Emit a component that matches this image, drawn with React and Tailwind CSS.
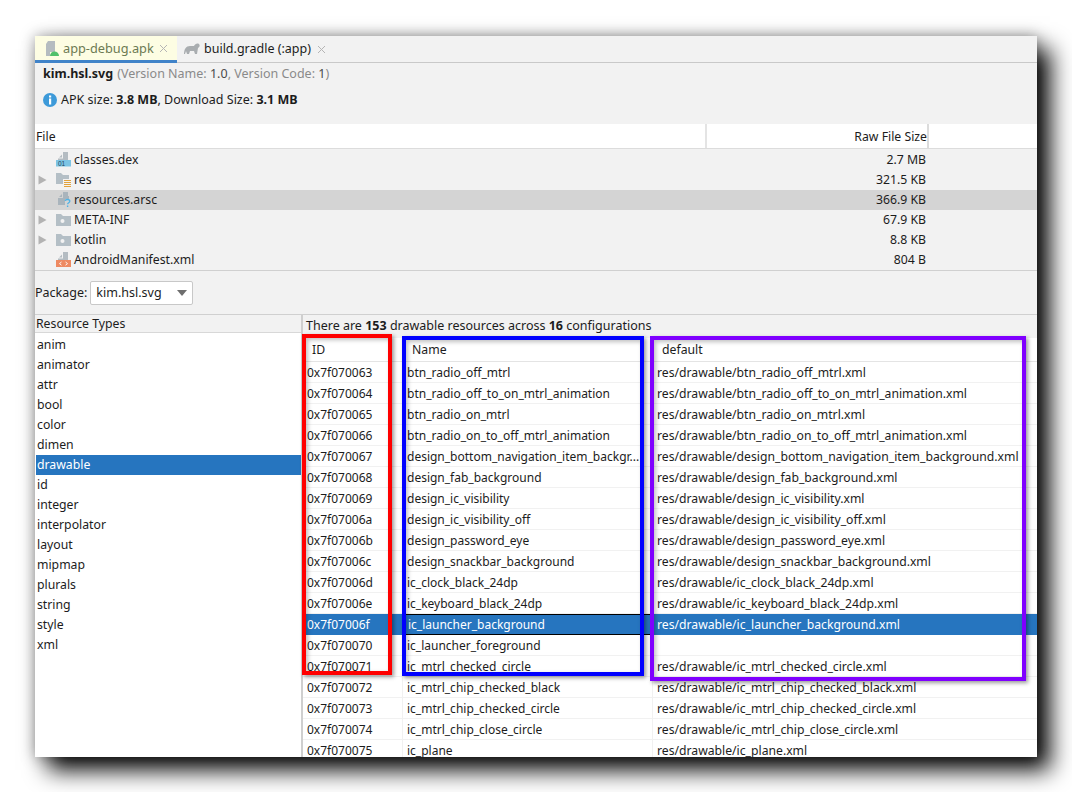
import React from "react";

const files = [
  { n: "classes.dex", s: "2.7 MB", i: "dex" },
  { n: "res", s: "321.5 KB", i: "res", a: true },
  { n: "resources.arsc", s: "366.9 KB", i: "arsc", sel: true },
  { n: "META-INF", s: "67.9 KB", i: "dir", a: true },
  { n: "kotlin", s: "8.8 KB", i: "dir", a: true },
  { n: "AndroidManifest.xml", s: "804 B", i: "xml" },
];
const types = ["anim","animator","attr","bool","color","dimen","drawable","id","integer","interpolator","layout","mipmap","plurals","string","style","xml"];
const rows = [
  ["0x7f070063","btn_radio_off_mtrl","res/drawable/btn_radio_off_mtrl.xml"],
  ["0x7f070064","btn_radio_off_to_on_mtrl_animation","res/drawable/btn_radio_off_to_on_mtrl_animation.xml"],
  ["0x7f070065","btn_radio_on_mtrl","res/drawable/btn_radio_on_mtrl.xml"],
  ["0x7f070066","btn_radio_on_to_off_mtrl_animation","res/drawable/btn_radio_on_to_off_mtrl_animation.xml"],
  ["0x7f070067","design_bottom_navigation_item_backgr...","res/drawable/design_bottom_navigation_item_background.xml"],
  ["0x7f070068","design_fab_background","res/drawable/design_fab_background.xml"],
  ["0x7f070069","design_ic_visibility","res/drawable/design_ic_visibility.xml"],
  ["0x7f07006a","design_ic_visibility_off","res/drawable/design_ic_visibility_off.xml"],
  ["0x7f07006b","design_password_eye","res/drawable/design_password_eye.xml"],
  ["0x7f07006c","design_snackbar_background","res/drawable/design_snackbar_background.xml"],
  ["0x7f07006d","ic_clock_black_24dp","res/drawable/ic_clock_black_24dp.xml"],
  ["0x7f07006e","ic_keyboard_black_24dp","res/drawable/ic_keyboard_black_24dp.xml"],
  ["0x7f07006f","ic_launcher_background","res/drawable/ic_launcher_background.xml"],
  ["0x7f070070","ic_launcher_foreground",""],
  ["0x7f070071","ic_mtrl_checked_circle","res/drawable/ic_mtrl_checked_circle.xml"],
  ["0x7f070072","ic_mtrl_chip_checked_black","res/drawable/ic_mtrl_chip_checked_black.xml"],
  ["0x7f070073","ic_mtrl_chip_checked_circle","res/drawable/ic_mtrl_chip_checked_circle.xml"],
  ["0x7f070074","ic_mtrl_chip_close_circle","res/drawable/ic_mtrl_chip_close_circle.xml"],
  ["0x7f070075","ic_plane","res/drawable/ic_plane.xml"],
];

const docPath = "M7 0H12V8H2V6.500H7Z M3 5.500L6 2.500V5.500Z";

function FileIcon({ k }) {
  if (k === "dex")
    return (
      <svg width="16" height="16" viewBox="0 0 16 16">
        <path d={docPath} fill="#b4bcc2" />
        <rect x="0" y="8" width="15" height="6.500" fill="#7cc4e4" />
        <text x="2" y="14" fontSize="6.500" fill="#23475a" fontFamily="Liberation Sans">01</text>
      </svg>
    );
  if (k === "xml")
    return (
      <svg width="16" height="16" viewBox="0 0 16 16">
        <path d={docPath} fill="#b4bcc2" />
        <rect x="0" y="8" width="15" height="7" fill="#ee8a62" />
        <path d="M5.500 10l-2 1.600 2 1.600M9.500 10l2 1.600-2 1.600" fill="none" stroke="#fff" strokeWidth="0.9" />
      </svg>
    );
  if (k === "arsc")
    return (
      <svg width="16" height="16" viewBox="0 0 16 16">
        <path d="M7 0H12V4H13V7H9V13H2V6H7Z M3 5L6 2V5Z" fill="#a9b4bc" />
        <path d="M9.200 8.800c.3-1.800 4.600-1.800 4.600.4 0 1.500-2.200 1.600-2.200 3.100" fill="none" stroke="#4fb3e6" strokeWidth="1.300" />
        <rect x="10.900" y="13.500" width="1.400" height="1.500" fill="#4fb3e6" />
      </svg>
    );
  if (k === "res")
    return (
      <svg width="16" height="16" viewBox="0 0 16 16">
        <path d="M0 1h5l2 2h6v9H0z" fill="#b4bfc6" />
        <rect x="7" y="7" width="9" height="9" fill="#f2f2f2" />
        <path d="M8 8.500h7M8 10.500h7M8 12.500h7M8 14.500h7" stroke="#e2a33c" strokeWidth="1" />
      </svg>
    );
  return (
    <svg width="16" height="16" viewBox="0 0 16 16">
      <path d="M0 2h5l2 2h8v10H0z" fill="#b4bfc6" />
      <circle cx="6.500" cy="9" r="2" fill="#f2f2f2" />
    </svg>
  );
}

const Arrow = () => (
  <svg width="9" height="10" viewBox="0 0 9 10"><path d="M0.500 0.500L8.500 5L0.500 9.500z" fill="#b3b3b3" /></svg>
);

const X = () => (
  <svg width="9" height="9" viewBox="0 0 9 9"><path d="M1 1l7 7M8 1l-7 7" stroke="#b5b5b5" strokeWidth="1" /></svg>
);

export default function App() {
  return (
    <div className="relative w-[1072px] h-[792px] bg-white pt-[36px] pl-[35px] overflow-hidden text-[12.25px] leading-[20px] text-[#1c1c1c] font-['Noto_Sans','Open_Sans',sans-serif]">
      <div className="w-[1002px] h-[721px] overflow-hidden flex flex-col bg-[#f2f2f2] shadow-[13px_13px_22px_rgba(0,0,0,0.98),0_0_14px_rgba(0,0,0,0.35)]">
        {/* tabs */}
        <div className="flex h-[27px] shrink-0 border-b border-[#c9c9c9]">
          <div className="w-[142px] bg-[#fdfde3] border-b-[3px] border-[#4083c9] flex items-center pl-[10px] -mb-px">
            <svg className="mt-[1px]" width="15" height="16" viewBox="0 0 15 16">
              <path d="M3 0h7v11H5v4H1V3z" fill="#b5bcc0" />
              <path d="M5 15a4.500 4.500 0 0 1 9 0z" fill="#4fc06a" />
            </svg>
            <span className="text-[12.75px] text-[#6c7a52] ml-[3px] mr-[5px]">app-debug.apk</span>
            <X />
          </div>
          <div className="flex items-center pl-[7px]">
            <svg width="16" height="12" viewBox="0 0 16 12">
              <path d="M0 11c0-5 2-8 6-8h4c1-2 3-3 5-2 1 1 1 3-1 4l-1 6h-2l-1-3H6l-1 3H3L2 8l-1 3z" fill="#a9adb0" />
            </svg>
            <span className="text-[12.5px] ml-[4px] mr-[6px]">build.gradle (:app)</span>
            <X />
          </div>
        </div>
        {/* info */}
        <div className="h-[61px] shrink-0 pl-[8px] flex flex-col text-[12.5px]">
          <div className="h-[22px] flex items-center">
            <span className="font-bold">kim.hsl.svg</span>
            <span className="ml-[4px] text-[#8a8a8a]">(Version Name: <span className="text-[#4a4a4a]">1.0</span>, Version Code: <span className="text-[#4a4a4a]">1</span>)</span>
          </div>
          <div className="mt-[5px] h-[20px] flex items-center gap-[4px]">
            <svg width="14" height="14" viewBox="0 0 14 14">
              <circle cx="7" cy="7" r="7" fill="#3d9ad9" />
              <rect x="6" y="5.500" width="2.200" height="6" fill="#fff" />
              <rect x="6" y="2.500" width="2.200" height="2" fill="#fff" />
            </svg>
            <span>APK size: <b>3.8 MB</b>, Download Size: <b>3.1 MB</b></span>
          </div>
        </div>
        {/* file table header */}
        <div className="h-[25px] shrink-0 bg-white border-b border-[#dcdcdc] flex items-stretch">
          <div className="w-[672px] border-r-2 border-[#e4e4e4] pl-[1px] pt-[1px] flex items-center">File</div>
          <div className="w-[222px] border-r-2 border-[#dcdcdc] pt-[1px] flex items-center justify-end">Raw File Size</div>
        </div>
        {/* files */}
        <div className="shrink-0 border-b border-[#d0d0d0] pt-[1px]">
          {files.map((f) => (
            <div key={f.n} className={`h-[20px] flex ${f.sel ? "bg-[#d4d4d4]" : ""}`}>
              <div className="w-[891px] flex items-center">
                <div className="w-[21px] pl-[3px] flex items-center">{f.a && <Arrow />}</div>
                <div className="w-[18px] flex"><FileIcon k={f.i} /></div>
                <div className="flex-1">{f.n}</div>
                <div className="whitespace-nowrap">{f.s}</div>
              </div>
            </div>
          ))}
        </div>
        {/* package */}
        <div className="h-[44px] shrink-0 flex items-center border-b border-[#d0d0d0] text-[12.5px]">
          <span>Package:</span>
          <div className="ml-[3px] w-[103px] h-[24px] bg-white border border-[#c8c8c8] rounded-[2px] flex items-center pl-[5px] relative">
            kim.hsl.svg
            <svg className="absolute right-[5px] top-[8px]" width="10" height="6" viewBox="0 0 10 6"><path d="M0 0h10L5 6z" fill="#6e6e6e" /></svg>
          </div>
        </div>
        {/* resources */}
        <div className="flex-1 flex min-h-0">
          <div className="w-[266px] shrink-0 border-r-[2px] border-[#cfcfcf] flex flex-col box-content">
            <div className="h-[18px] shrink-0 pl-[1px] flex items-center border-b border-[#d8d8d8]">Resource Types</div>
            <div className="flex-1 bg-white pt-[2px]">
              {types.map((t) => (
                <div key={t} className={`h-[20px] pl-[1px] ml-[1px] flex items-center ${t === "drawable" ? "bg-[#2675bf] text-white" : ""}`}>{t}</div>
              ))}
            </div>
          </div>
          <div className="flex-1 min-w-0 flex flex-col">
            <div className="h-[23px] shrink-0 pl-[3px] flex items-center pb-[2px] text-[12.5px]">
              <span>There are <b>153</b> drawable resources across <b>16</b> configurations</span>
            </div>
            <div className="flex-1 bg-white overflow-hidden">
              <div className="h-[24px] flex border-b border-[#e4e4e4]">
                <div className="w-[100px] pl-[9px] flex items-center border-r border-[#e4e4e4]">ID</div>
                <div className="w-[250px] pl-[9px] flex items-center border-r border-[#e4e4e4]">Name</div>
                <div className="flex-1 pl-[9px] flex items-center">default</div>
              </div>
              {rows.map((r, i) => {
                const sel = i === 12;
                return (
                  <div key={r[0]} className={`h-[21px] flex items-stretch whitespace-nowrap ${sel ? "bg-[#2675bf] text-white" : "border-b border-[#f1f1f1]"}`}>
                    <div className={`w-[100px] pl-[4px] pt-[1px] text-[12px] flex items-center ${sel ? "" : "border-r border-[#f1f1f1]"}`}>{r[0]}</div>
                    <div className={`w-[250px] pl-[4px] pt-[1px] text-[12px] flex items-center ${sel ? "border border-black" : "border-r border-[#f1f1f1]"}`}>{r[1]}</div>
                    <div className="flex-1 pl-[4px] pt-[1px] text-[12.2px] flex items-center">{r[2]}</div>
                  </div>
                );
              })}
            </div>
          </div>
        </div>
      </div>
      {/* annotations */}
      <div className="absolute left-[302px] top-[334px] w-[90px] h-[341px] border-[4px] border-[#ff0000] shadow-[2px_2px_4px_rgba(0,0,0,0.4),inset_2px_2px_4px_rgba(0,0,0,0.25)]" />
      <div className="absolute left-[402px] top-[336px] w-[242px] h-[340px] border-[4px] border-[#0000ff] shadow-[2px_2px_4px_rgba(0,0,0,0.4),inset_2px_2px_4px_rgba(0,0,0,0.25)]" />
      <div className="absolute left-[650px] top-[336px] w-[376px] h-[345px] border-[4px] border-[#7f00ff] shadow-[2px_2px_4px_rgba(0,0,0,0.4),inset_2px_2px_4px_rgba(0,0,0,0.25)]" />
    </div>
  );
}
